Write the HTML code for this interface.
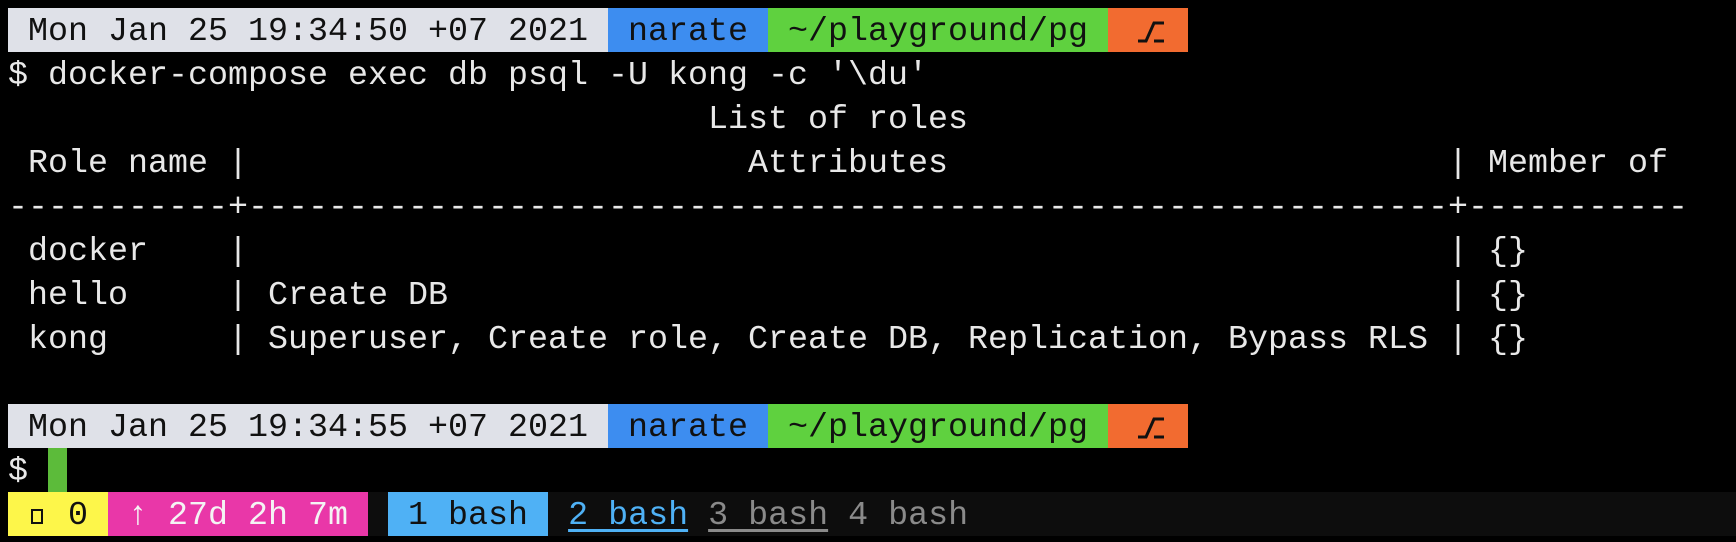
<!DOCTYPE html>
<html><head><meta charset="utf-8"><style>
html,body{margin:0;padding:0;background:#000;width:1736px;height:542px;overflow:hidden}
.l{position:absolute;left:8px;height:44px;line-height:48px;font-family:"Liberation Mono",monospace;font-size:33.33px;color:#e8e8e8;white-space:pre}
span{display:inline-block;height:44px}
.g{background:#dfe1e8;color:#111}.b{background:#3d8df0;color:#111}.gr{background:#5fd13f;color:#111}.o{background:#f26b30;color:#111;width:80px;vertical-align:top;position:relative}
.y{background:#fdf64a;color:#111;width:100px;vertical-align:top}.p{background:#e937a8;color:#f4f4f4}.lb{background:#4fb1f5;color:#111}
.u1{color:#4fb1f5;text-decoration:underline;text-underline-offset:5px}
.u2{color:#8a8a8a;text-decoration:underline;text-underline-offset:5px}
.gy{color:#8a8a8a}
.sq{display:inline-block;width:20px;height:44px;vertical-align:top;position:relative}
.sq:after{content:"";position:absolute;left:3px;top:17px;width:12px;height:15px;border:2px solid #111;box-sizing:border-box}
</style></head><body>
<div class="l" style="top:8px"><span class="g"> Mon Jan 25 19:34:50 +07 2021 </span><span class="b"> narate </span><span class="gr"> ~/playground/pg </span><span class="o"><svg width="80" height="44" style="position:absolute;left:0;top:0"><path d="M30 33H38L46 15H56M46 33H56" stroke="#111" stroke-width="3" fill="none"/></svg></span></div>
<div class="l" style="top:52px">$ docker-compose exec db psql -U kong -c '\du'</div>
<div class="l" style="top:96px">                                   List of roles</div>
<div class="l" style="top:140px"> Role name |                         Attributes                         | Member of</div>
<div class="l" style="top:184px">-----------+------------------------------------------------------------+-----------</div>
<div class="l" style="top:228px"> docker    |                                                            | {}</div>
<div class="l" style="top:272px"> hello     | Create DB                                                  | {}</div>
<div class="l" style="top:316px"> kong      | Superuser, Create role, Create DB, Replication, Bypass RLS | {}</div>
<div class="l" style="top:404px"><span class="g"> Mon Jan 25 19:34:55 +07 2021 </span><span class="b"> narate </span><span class="gr"> ~/playground/pg </span><span class="o"><svg width="80" height="44" style="position:absolute;left:0;top:0"><path d="M30 33H38L46 15H56M46 33H56" stroke="#111" stroke-width="3" fill="none"/></svg></span></div>
<div class="l" style="top:448px">$ </div>
<div style="position:absolute;left:48px;top:448px;width:19px;height:44px;background:#5cbb3a"></div>
<div style="position:absolute;left:8px;top:492px;width:1728px;height:44px;background:#0d0d0d"></div>
<div class="l" style="top:492px"><span class="y"> <span class="sq"></span> 0 </span><span class="p"> ↑ 27d 2h 7m </span><span> </span><span class="lb"> 1 bash </span> <span class="u1">2 bash</span> <span class="u2">3 bash</span> <span class="gy">4 bash</span></div>
</body></html>
